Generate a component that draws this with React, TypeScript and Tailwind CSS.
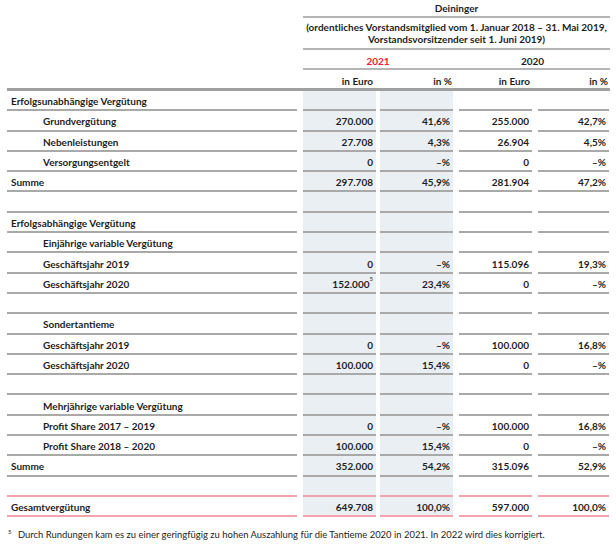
import React from 'react';

type RowData = {
  label?: string;
  indent?: boolean;
  v?: [string, string, string, string];
  sup?: string;
  pink?: boolean;
};

const rows: RowData[] = [
  { label: 'Erfolgsunabhängige Vergütung', v: ['', '', '', ''] },
  { label: 'Grundvergütung', indent: true, v: ['270.000', '41,6%', '255.000', '42,7%'] },
  { label: 'Nebenleistungen', indent: true, v: ['27.708', '4,3%', '26.904', '4,5%'] },
  { label: 'Versorgungsentgelt', indent: true, v: ['0', '–%', '0', '–%'] },
  { label: 'Summe', v: ['297.708', '45,9%', '281.904', '47,2%'] },
  {},
  { label: 'Erfolgsabhängige Vergütung' },
  { label: 'Einjährige variable Vergütung', indent: true },
  { label: 'Geschäftsjahr 2019', indent: true, v: ['0', '–%', '115.096', '19,3%'] },
  { label: 'Geschäftsjahr 2020', indent: true, v: ['152.000', '23,4%', '0', '–%'], sup: '5' },
  {},
  { label: 'Sondertantieme', indent: true },
  { label: 'Geschäftsjahr 2019', indent: true, v: ['0', '–%', '100.000', '16,8%'] },
  { label: 'Geschäftsjahr 2020', indent: true, v: ['100.000', '15,4%', '0', '–%'] },
  {},
  { label: 'Mehrjährige variable Vergütung', indent: true },
  { label: 'Profit Share 2017 – 2019', indent: true, v: ['0', '–%', '100.000', '16,8%'] },
  { label: 'Profit Share 2018 – 2020', indent: true, v: ['100.000', '15,4%', '0', '–%'] },
  { label: 'Summe', v: ['352.000', '54,2%', '315.096', '52,9%'] },
  { pink: true },
  { label: 'Gesamtvergütung', v: ['649.708', '100,0%', '597.000', '100,0%'], pink: true },
];

function Row({ r }: { r: RowData }) {
  const line = r.pink ? 'border-[#f2a3ab]' : 'border-[#a9a9a9]';
  const v = r.v ?? ['', '', '', ''];
  const cell = `h-full flex items-center justify-end pr-[3px] pt-[3px] border-b-2 ${line}`;
  return (
    <div className="flex h-[20.3px]">
      <div
        className={`w-[290px] h-full flex items-center pt-[3px] border-b-2 ${line} ${
          r.indent ? 'pl-[36px]' : 'pl-[4px]'
        }`}
      >
        {r.label}
      </div>
      <div className={`ml-[6px] w-[73px] bg-[#eaeff4] ${cell}`}>
        {v[0]}
        {r.sup && <sup className="text-[6px] font-normal -mt-1">{r.sup}</sup>}
      </div>
      <div className={`ml-[4px] w-[73px] bg-[#eaeff4] ${cell}`}>{v[1]}</div>
      <div className={`ml-[6px] w-[73px] ${cell}`}>{v[2]}</div>
      <div className={`ml-[6px] w-[71px] ${cell}`}>{v[3]}</div>
    </div>
  );
}

export default function App() {
  return (
    <div className="w-[616px] h-[549px] bg-white text-[#1e1e1e] font-['Lato',sans-serif] text-[10px] font-bold overflow-hidden">
      <div className="ml-[7px] w-[603px]">
        {/* header */}
        <div className="flex">
          <div className="w-[296px]" />
          <div className="w-[307px]">
            <div className="h-[18px] flex items-center justify-center pt-[1px] border-b-2 border-[#b5b5b5]">
              Deininger
            </div>
            <div className="h-[32px] flex flex-col items-center justify-center leading-[12px] border-b-2 border-[#b5b5b5] text-center">
              <div>(ordentliches Vorstandsmitglied vom 1. Januar 2018 – 31. Mai 2019,</div>
              <div>Vorstandsvorsitzender seit 1. Juni 2019)</div>
            </div>
            <div className="h-[20px] flex border-b-2 border-[#b5b5b5] pt-[4px]">
              <div className="w-[150px] flex items-center justify-center text-[#ee1c2e]">2021</div>
              <div className="flex-1 flex items-center justify-center pl-[2px]">2020</div>
            </div>
          </div>
        </div>
        <div className="flex h-[21px] pt-[5px] border-b-[3px] border-[#a0a0a0]">
          <div className="w-[296px]" />
          <div className="w-[73px] flex items-center justify-end pr-[3px]">in Euro</div>
          <div className="ml-[4px] w-[73px] flex items-center justify-end pr-[1px]">in %</div>
          <div className="ml-[6px] w-[73px] flex items-center justify-end pr-[2px]">in Euro</div>
          <div className="ml-[6px] w-[71px] flex items-center justify-end pr-[1px]">in %</div>
        </div>
        {/* body */}
        {rows.map((r, i) => (
          <Row key={i} r={r} />
        ))}
      </div>
      <div className="mt-[11px] ml-[8px] flex font-normal text-[9.45px]">
        <span className="text-[6px] w-[10px] -mt-[1px]">5</span>
        <span>
          Durch Rundungen kam es zu einer geringfügig zu hohen Auszahlung für die Tantieme 2020 in 2021. In
          2022 wird dies korrigiert.
        </span>
      </div>
    </div>
  );
}
